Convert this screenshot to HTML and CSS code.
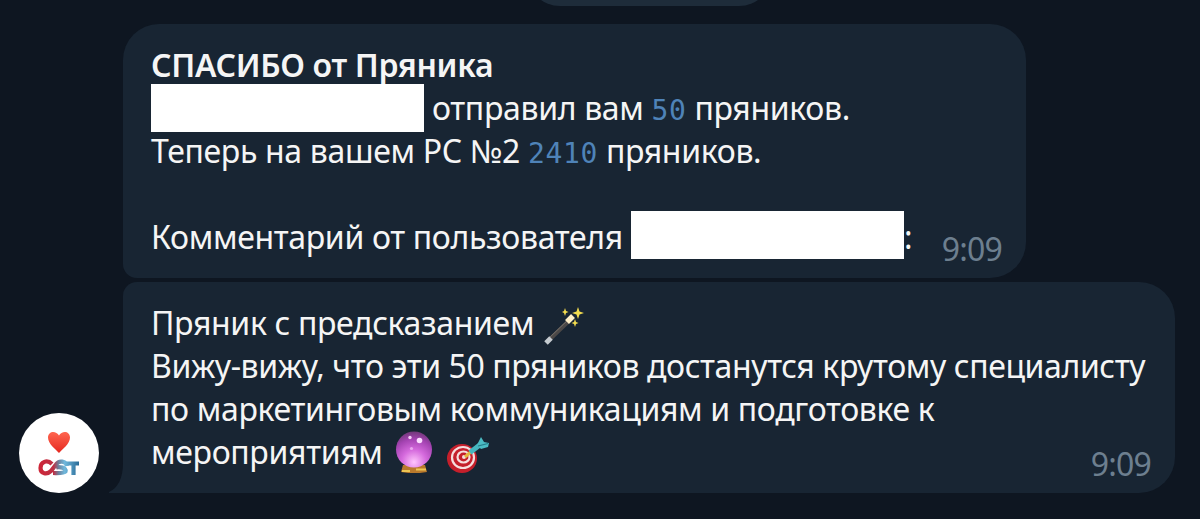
FILE: index.html
```
<!DOCTYPE html>
<html lang="ru">
<head>
  <meta charset="UTF-8" />
  <meta name="viewport" content="width=device-width, initial-scale=1.0"/>
  <title>СПАСИБО от Пряника</title>
  <link rel="stylesheet" href="styles.css">
</head>
<body>
  <div class="chat">
    <div class="date"></div>

    <div class="message first">
      <p class="line title">СПАСИБО от Пряника</p>
      <p class="line"><span class="hidden-name"></span> отправил вам <code>50</code> пряников.</p>
      <p class="line">Теперь на вашем РС №2 <code>2410</code> пряников.</p>
      <p class="line empty"></p>
      <p class="line">Комментарий от пользователя <span class="hidden-name author"></span>:</p>
      <span class="time">9:09</span>
    </div>

    <div class="row">
      <!-- Avatar -->
      <svg class="avatar" viewBox="0 0 80 80">
        <defs>
          <linearGradient id="heart" x1="0" y1="0" x2="0" y2="1">
            <stop offset="0" stop-color="#ff6650"/>
            <stop offset="1" stop-color="#e5281f"/>
          </linearGradient>
          <linearGradient id="logo" gradientUnits="userSpaceOnUse" x1="19" y1="0" x2="60" y2="0">
            <stop offset="0" stop-color="#cf2436"/>
            <stop offset="0.38" stop-color="#bd3045"/>
            <stop offset="0.5" stop-color="#6c809c"/>
            <stop offset="0.65" stop-color="#70b8dc"/>
            <stop offset="1" stop-color="#286a96"/>
          </linearGradient>
        </defs>
        <circle cx="40" cy="40" r="40" fill="#fff"/>
        <path d="M40 40 C36.500 36 29 31 29 24.500 C29 18 37 17 40 22.500 C43 17 51 18 51 24.500 C51 31 43.500 36 40 40Z" fill="url(#heart)"/>
        <g fill="none" stroke="url(#logo)" stroke-width="4.200">
          <path d="M33 51 C28 46 21.500 49 21.500 55 C21.500 61 28 62 32 58 L37 51.500 C40 47 47 48 48 53"/>
          <path d="M37 54.500 C40 53.500 48 54.500 46.500 58.500 C45 60.500 39 60 34 60"/>
          <path d="M48 50.500 H60 M54.500 50 V62"/>
        </g>
      </svg>

      <div class="message second">
        <svg class="tail" viewBox="0 0 14 30">
          <path d="M14 0 C14 15 9 25 0 29 V30 H14Z" fill="#182533"/>
        </svg>
        <p class="line">Пряник с предсказанием
          <svg class="emoji wand" viewBox="0 0 42 42">
            <path d="M5 37 L31 12" stroke="#4b4847" stroke-width="4"/>
            <path d="M4 36 L30 11" stroke="#77716a" stroke-width="1"/>
            <path d="M4 38 L9 33" stroke="#c5cbd0" stroke-width="5"/>
            <path d="M25 17 L31 11" stroke="#fff0c8" stroke-width="5.500"/>
            <path d="M36 2 L37.500 6.500 L42 8 L37.500 9.500 L36 14 L34.500 9.500 L30 8 L34.500 6.500Z M23 3 L24 6 L26.500 7 L24 8 L23 11 L22 8 L20 7 L22 6Z M33 14 L34 17 L36.500 18 L34 19 L33 22 L32 19 L29.500 18 L32 17Z" fill="#f2dc4e"/>
          </svg>
        </p>
        <p class="line long">Вижу-вижу, что эти 50 пряников достанутся крутому специалисту</p>
        <p class="line">по маркетинговым коммуникациям и подготовке к</p>
        <p class="line">мероприятиям
          <svg class="emoji ball" viewBox="0 0 42 42">
            <defs>
              <radialGradient id="ball" cx="0.5" cy="0.85" r="0.85">
                <stop offset="0" stop-color="#ffc5fc"/>
                <stop offset="0.4" stop-color="#d56add"/>
                <stop offset="0.75" stop-color="#a443b2"/>
                <stop offset="1" stop-color="#713879"/>
              </radialGradient>
            </defs>
            <path d="M10 34 H32 L34 41 Q21 43.500 8 41Z" fill="#b9792c"/>
            <path d="M9 40 H17 M23 38.500 H33" stroke="#edc553" stroke-width="2"/>
            <circle cx="21" cy="18.500" r="18" fill="url(#ball)"/>
            <circle cx="26.500" cy="9.500" r="2.800" fill="#fbdcff"/>
            <circle cx="17" cy="6.500" r="1.700" fill="#f4cef6"/>
            <circle cx="18.500" cy="17.500" r="1.600" fill="#e8a5ed"/>
          </svg>
          <svg class="emoji target" viewBox="0 0 44 42">
            <ellipse cx="16" cy="22.500" rx="15" ry="14.500" fill="#c51f2b"/>
            <ellipse cx="17" cy="21.500" rx="11" ry="10.500" fill="none" stroke="#f5dede" stroke-width="2.200"/>
            <ellipse cx="17.500" cy="21" rx="6" ry="5.500" fill="none" stroke="#f5dede" stroke-width="2.200"/>
            <circle cx="18" cy="21" r="2" fill="#f5dede"/>
            <path d="M19 21 L27 14" stroke="#e4b63f" stroke-width="3"/>
            <path d="M24 16.500 L35 8" stroke="#45b6bf" stroke-width="5"/>
            <path d="M31 9 L35 1 L38 6 L43 7 L42 11 L35 13Z" fill="#4bbbc3"/>
            <path d="M32 10 L42 7.500" stroke="#247b89" stroke-width="1.200"/>
          </svg>
        </p>
        <span class="time">9:09</span>
      </div>
    </div>
  </div>
</body>
</html>
```
FILE: styles.css
```
* {
  margin: 0;
  padding: 0;
  box-sizing: border-box;
}

body {
  width: 1200px;
  height: 519px;
  overflow: hidden;
  background: #0e1621;
  color: #f5f5f5;
  font-family: "Noto Sans", "Open Sans", sans-serif;
  font-size: 32px;
  line-height: 43px;
  letter-spacing: -0.34px;
}

.chat {
  display: flex;
  flex-direction: column;
}

.date {
  width: 245px;
  height: 66px;
  margin: -60px 0 18px 527px;
  background: #1e2c3a;
  border-radius: 33px;
}

.message {
  position: relative;
  background: #182533;
  padding: 19px 28px;
}

.first {
  width: 903px;
  height: 254px;
  margin-left: 123px;
  margin-bottom: 4px;
  border-radius: 36px 36px 36px 14px;
}

.row {
  display: flex;
  align-items: flex-end;
  gap: 24px;
  padding-left: 19px;
}

.second {
  width: 1052px;
  height: 211px;
  border-radius: 14px 36px 36px 0;
}

.line {
  height: 43px;
  white-space: nowrap;
}

.title {
  font-weight: 600;
  letter-spacing: -0.34px;
}

.long {
  letter-spacing: -0.39px;
}

.hidden-name {
  display: inline-block;
  width: 273px;
  height: 48px;
  margin: -5px 0 -10px;
  background: #fff;
  vertical-align: -2px;
}

.author {
  vertical-align: 0;
}

code {
  font-family: "DejaVu Sans Mono", monospace;
  font-size: 28px;
  letter-spacing: 0.6px;
  color: #4f83b8;
}

.time {
  position: absolute;
  right: 24px;
  bottom: 8px;
  color: #6d7f8f;
  letter-spacing: -0.8px;
}

.avatar {
  width: 80px;
  height: 80px;
}

.tail {
  position: absolute;
  left: -14px;
  bottom: 0;
  width: 14px;
  height: 30px;
}

.emoji {
  width: 42px;
  height: 42px;
  vertical-align: top;
}

.wand {
  margin-top: 4px;
}

.ball {
  margin: 1px 0 0 2px;
}

.target {
  width: 44px;
  margin: 6px 0 0 3px;
}
```
